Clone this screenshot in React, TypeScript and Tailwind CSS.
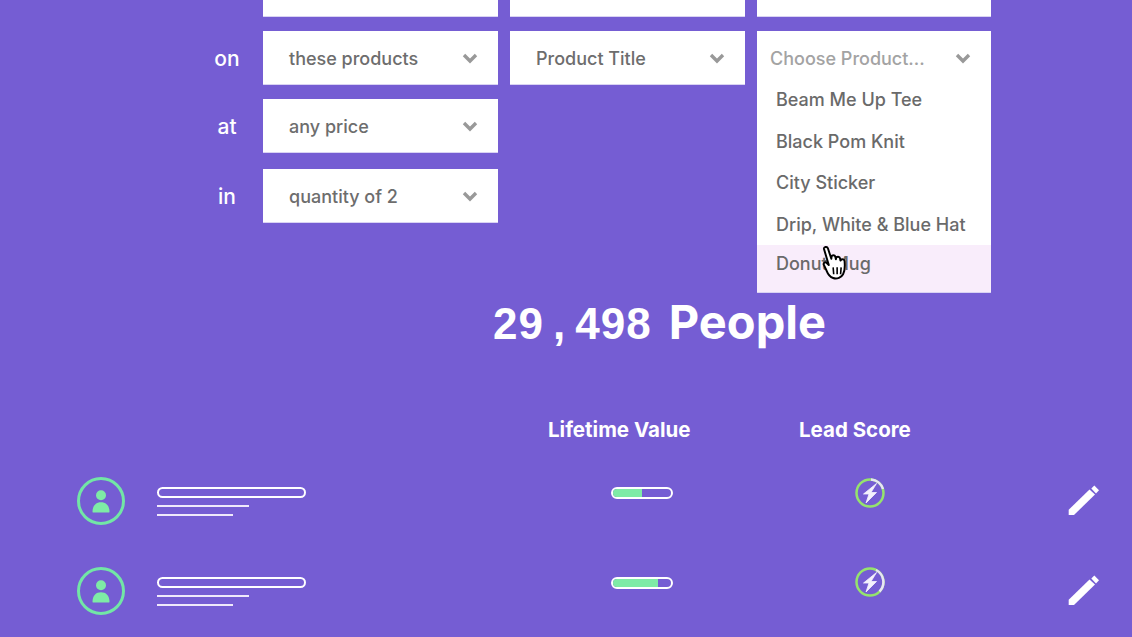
const font = "font-['Inter','Open_Sans',sans-serif]"

function Chevron() {
  return (
    <svg width="16" height="12" viewBox="0 0 16 12" className="shrink-0">
      <path d="M2 3l6 6 6-6" fill="none" stroke="#999999" strokeWidth="3.4" />
    </svg>
  )
}

function Select({ text, muted, className = "", pad = "pl-[26px]" }: { text?: string; muted?: boolean; className?: string; pad?: string }) {
  return (
    <div className={`flex h-[54px] items-center justify-between bg-white ${pad} pr-[20px] border-b border-[#d9d3f3] ${className}`}>
      <span className={`pt-[1px] text-[18px] font-medium whitespace-nowrap ${muted ? "text-[#a3a3a3]" : "text-[#6d6d6d]"}`}>{text}</span>
      <Chevron />
    </div>
  )
}

function Label({ text, className = "" }: { text: string; className?: string }) {
  return <div className={`flex h-[54px] items-center justify-center pl-[3px] pt-[1px] text-[21px] font-medium text-white ${className}`}>{text}</div>
}

function HandCursor() {
  return (
    <svg width="32" height="39" viewBox="0 0 28 34" className="absolute left-[63px] top-[0px]">
      <path
        d="M3.500 3.500c-.4-1.800 2.700-2.800 3.400-.7l3 9.200.2-1.800c.2-1.700 3-1.700 3.300 0l.5 2.200.3-1.200c.4-1.500 3-1.300 3.300.3l.4 2.100.5-.7c.8-1.100 3-.4 3.100 1.100.4 4.100.5 8.100-1.300 11.500-1.500 2.800-5.300 4.500-8.700 3.300-3-1-4.600-3.500-5.700-6.300l-2.400-5.100c-.8-1.600 1.100-3.100 2.500-1.700l1.800 1.800z"
        fill="white"
        stroke="black"
        strokeWidth="1.700"
        strokeLinejoin="round"
      />
      <path d="M11.500 19.500l.5 6M15 19.500v6M18.500 19.500l-.5 6" stroke="black" strokeWidth="1.400" fill="none" />
    </svg>
  )
}

function ProductMenu() {
  const items = ["Beam Me Up Tee", "Black Pom Knit", "City Sticker", "Drip, White & Blue Hat"]
  return (
    <div className="absolute left-0 right-0 top-[48px] bg-white">
      <div className="flex flex-col">
        {items.map((item) => (
          <div key={item} className="flex h-[41.500px] items-center pl-[19px] text-[18px] font-medium text-[#6a6a6a] whitespace-nowrap">
            {item}
          </div>
        ))}
      </div>
      <div className="relative h-[48px] border-b border-[#d9d3f3] bg-[#f9edfb] pl-[19px] pt-[5px] text-[18px] font-medium text-[#6a6a6a]">
        Donut Mug
        <HandCursor />
      </div>
    </div>
  )
}

function Avatar() {
  return (
    <svg width="48" height="48" viewBox="0 0 48 48" className="shrink-0">
      <circle cx="24" cy="24" r="22.500" fill="none" stroke="#72e6a6" strokeWidth="3" />
      <circle cx="24" cy="18.300" r="5" fill="#7eeba6" />
      <path d="M15.500 35c0-6.500 3.600-9.700 8.500-9.700s8.500 3.200 8.500 9.700c0 .3-.2.500-.5.500h-16c-.3 0-.5-.2-.5-.5z" fill="#7eeba6" />
    </svg>
  )
}

function Lines() {
  return (
    <div className="flex w-[149px] flex-col pt-[10px]">
      <div className="h-[11px] rounded-full border-2 border-white" />
      <div className="mt-[7px] h-[2px] w-[92px] bg-[#efe9fb]" />
      <div className="mt-[7px] h-[2px] w-[76px] bg-[#efe9fb]" />
    </div>
  )
}

function Progress({ fill }: { fill: string }) {
  return (
    <div className="mt-[10px] ml-[305px] h-[12px] w-[62px] rounded-full border-2 border-white">
      <div className={`h-full rounded-l-full bg-[#7eeba6] ${fill}`} />
    </div>
  )
}

function Score({ arc, offset }: { arc: string; offset: string }) {
  return (
    <svg width="30" height="30" viewBox="0 0 30 30" className={`ml-[182px] shrink-0 ${offset}`}>
      <circle cx="15" cy="15" r="13.500" fill="none" stroke="#95e36d" strokeWidth="2.500" />
      <path d={arc} fill="none" stroke="#e9e4f8" strokeWidth="2.500" />
      <path d="M21.500 5.500L8.500 16h5.500L11 25l10.500-10.500H16z" fill="#f4f1fd" stroke="#f4f1fd" strokeWidth="0.800" strokeLinejoin="round" />
    </svg>
  )
}

function Pencil() {
  return (
    <svg width="32" height="32" viewBox="0 0 32 32" className="mt-[8px] ml-[183px] shrink-0">
      <path d="M.7 24.800V30H6L27 9.500 21.500 4.500z" fill="white" />
      <path d="M23.300 3.500L26.300.4 31 5.200 28 8.500z" fill="white" />
    </svg>
  )
}

function PersonRow({ fill, arc, offset }: { fill: string; arc: string; offset: string }) {
  return (
    <div className="flex h-[48px] items-start">
      <Avatar />
      <div className="ml-[32px]">
        <Lines />
      </div>
      <Progress fill={fill} />
      <Score arc={arc} offset={offset} />
      <Pencil />
    </div>
  )
}

export default function App() {
  return (
    <div className={`h-[637px] w-[1132px] overflow-hidden bg-[#755dd3] ${font}`}>
      {/* Filter form, first row runs off the top */}
      <div className="mt-[-37px] ml-[200px] grid w-[791px] grid-cols-[51px_235px_235px_234px] gap-x-[12px] gap-y-[14px]">
        <div />
        <Select />
        <Select />
        <Select />

        <Label text="on" />
        <Select text="these products" />
        <Select text="Product Title" />
        <div className="relative">
          <Select text="Choose Product..." muted pad="pl-[13px]" />
          <ProductMenu />
        </div>

        <Label text="at" />
        <Select text="any price" />
        <div />
        <div />

        <Label text="in" className="mt-[2px]" />
        <Select text="quantity of 2" className="mt-[2px]" />
      </div>

      <h1 className="mt-[71px] ml-[493px] text-[47px] leading-[56px] font-bold text-white whitespace-nowrap">
        <span className="font-['Liberation_Sans'] text-[44px] tracking-[1px]">
          29<span className="mx-[9px]">,</span>498
        </span>
        <span className="ml-[6px]"> People</span>
      </h1>

      <div className="mt-[65px] ml-[548px] flex text-[20.500px] leading-[26px] font-bold text-white">
        <span className="w-[251px]">Lifetime Value</span>
        <span>Lead Score</span>
      </div>

      <div className="mt-[34px] ml-[77px] flex flex-col gap-[42px]">
        <PersonRow fill="w-1/2" arc="M16 1.500A13.500 13.500 0 0 1 28 11" offset="mt-[1px]" />
        <PersonRow fill="w-[78%]" arc="M21 3A13.500 13.500 0 0 1 24.500 24.500" offset="mt-0" />
      </div>
    </div>
  )
}
